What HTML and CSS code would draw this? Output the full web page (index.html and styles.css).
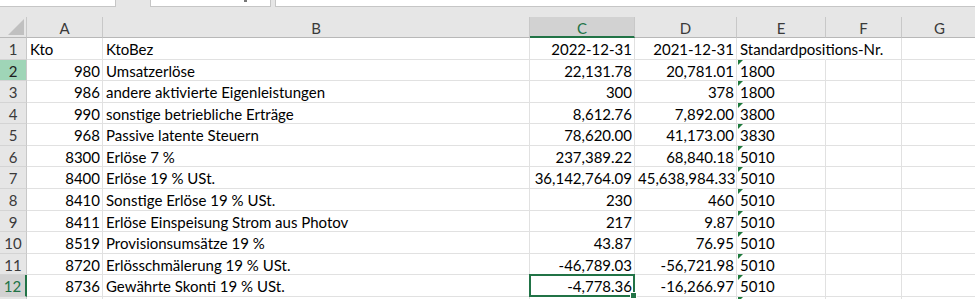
FILE: index.html
```html
<!DOCTYPE html>
<html lang="de">
<head>
<meta charset="utf-8">
<title>Tabelle</title>
<link rel="stylesheet" href="styles.css">
</head>
<body>
<div class="toolbar">
  <div class="box box-name"></div>
  <div class="box box-fn"><span class="chev"></span></div>
  <div class="box box-formula"></div>
</div>
<div class="sheet">
  <div class="corner"><span class="tri"></span></div>
  <div class="ch">A</div><div class="ch">B</div><div class="ch sel">C</div><div class="ch">D</div><div class="ch">E</div><div class="ch">F</div><div class="ch">G</div>

  <div class="rh">1</div><div class="c">Kto</div><div class="c">KtoBez</div><div class="c n">2022-12-31</div><div class="c n">2021-12-31</div><div class="c spill">Standardpositions-Nr.</div><div class="c"></div><div class="c"></div>

  <div class="rh hi">2</div><div class="c n">980</div><div class="c">Umsatzerlöse</div><div class="c n">22,131.78</div><div class="c n">20,781.01</div><div class="c t">1800</div><div class="c"></div><div class="c"></div>

  <div class="rh">3</div><div class="c n">986</div><div class="c">andere aktivierte Eigenleistungen</div><div class="c n">300</div><div class="c n">378</div><div class="c t">1800</div><div class="c"></div><div class="c"></div>

  <div class="rh">4</div><div class="c n">990</div><div class="c">sonstige betriebliche Erträge</div><div class="c n">8,612.76</div><div class="c n">7,892.00</div><div class="c t">3800</div><div class="c"></div><div class="c"></div>

  <div class="rh">5</div><div class="c n">968</div><div class="c">Passive latente Steuern</div><div class="c n">78,620.00</div><div class="c n">41,173.00</div><div class="c t">3830</div><div class="c"></div><div class="c"></div>

  <div class="rh">6</div><div class="c n">8300</div><div class="c">Erlöse 7 %</div><div class="c n">237,389.22</div><div class="c n">68,840.18</div><div class="c t">5010</div><div class="c"></div><div class="c"></div>

  <div class="rh">7</div><div class="c n">8400</div><div class="c">Erlöse 19 % USt.</div><div class="c n">36,142,764.09</div><div class="c n">45,638,984.33</div><div class="c t">5010</div><div class="c"></div><div class="c"></div>

  <div class="rh">8</div><div class="c n">8410</div><div class="c">Sonstige Erlöse 19 % USt.</div><div class="c n">230</div><div class="c n">460</div><div class="c t">5010</div><div class="c"></div><div class="c"></div>

  <div class="rh">9</div><div class="c n">8411</div><div class="c">Erlöse Einspeisung Strom aus Photov</div><div class="c n">217</div><div class="c n">9.87</div><div class="c t">5010</div><div class="c"></div><div class="c"></div>

  <div class="rh">10</div><div class="c n">8519</div><div class="c">Provisionsumsätze 19 %</div><div class="c n">43.87</div><div class="c n">76.95</div><div class="c t">5010</div><div class="c"></div><div class="c"></div>

  <div class="rh">11</div><div class="c n">8720</div><div class="c">Erlösschmälerung 19 % USt.</div><div class="c n">-46,789.03</div><div class="c n">-56,721.98</div><div class="c t">5010</div><div class="c"></div><div class="c"></div>

  <div class="rh rsel">12</div><div class="c n">8736</div><div class="c">Gewährte Skonti 19 % USt.</div><div class="c n active">-4,778.36</div><div class="c n">-16,266.97</div><div class="c t">5010</div><div class="c"></div><div class="c"></div>

  <div class="rh"></div><div class="c n"></div><div class="c"></div><div class="c n"></div><div class="c n"></div><div class="c t"></div><div class="c"></div><div class="c"></div>
</div>
</body>
</html>
```

FILE: styles.css
```css
* { box-sizing: border-box; }
html, body { margin: 0; padding: 0; }
body {
  background: #ffffff;
  font-family: Lato, "Open Sans", sans-serif;
  font-size: 15px;
  color: #000;
  width: 975px;
  height: 299px;
  overflow: hidden;
}
.toolbar {
  height: 17px;
  background: #e6e6e6;
  position: relative;
  display: flex;
  align-items: flex-start;
}
.box {
  height: 7px;
  background: #fff;
  border: 1px solid #c6c6c6;
  border-top: none;
}
.box-name { width: 116px; border-left: none; }
.box-fn { width: 121px; margin-left: 34px; position: relative; }
.box-formula { flex: 1; margin-left: 4px; border-right: none; }
.chev {
  position: absolute;
  left: 93px;
  top: 0;
  width: 3px;
  height: 2px;
  background: #777;
}
.sheet {
  display: grid;
  grid-template-columns: 27px 76px 427px 105px 102px 89px 76px 76px;
  grid-template-rows: 21px repeat(13, 21.584px);
  height: 282px;
  overflow: hidden;
}
.corner {
  background: #e6e6e6;
  border-right: 1px solid #c8c8c8;
  border-bottom: 1px solid #b8b8b8;
  position: relative;
}
.tri {
  position: absolute;
  right: 2px;
  bottom: 2px;
  width: 0;
  height: 0;
  border-left: 16px solid transparent;
  border-bottom: 16px solid #c0c0c0;
}
.ch {
  background: #e6e6e6;
  border-right: 1px solid #c8c8c8;
  border-bottom: 1px solid #b8b8b8;
  color: #3a3a3a;
  text-align: center;
  font-size: 15px;
  line-height: 22px;
}
.ch.sel {
  background: #d2d2d2;
  color: #217346;
  border-bottom: 2px solid #217346;
  line-height: 22px;
}
.rh {
  background: #e6e6e6;
  border-right: 1px solid #c8c8c8;
  border-bottom: 1px solid #d4d4d4;
  color: #3a3a3a;
  text-align: center;
  line-height: 22px;
}
.rh.hi { background: #9fd5b7; color: #1e1e1e; }
.rh.rsel {
  background: #d2d2d2;
  color: #217346;
  border-right: 2px solid #217346;
}
.c {
  border-right: 1px solid #e1e1e1;
  border-bottom: 1px solid #e1e1e1;
  padding: 0 3px;
  line-height: 22px;
  white-space: nowrap;
  overflow: hidden;
  position: relative;
}
.c.n { text-align: right; padding-right: 2px; }
.c.spill { overflow: visible; border-right-color: transparent; }
.c.t::before {
  content: "";
  position: absolute;
  left: 1px;
  top: 0;
  width: 0;
  height: 0;
  border-top: 5px solid #1e7a3c;
  border-right: 5px solid transparent;
}
.c.active { overflow: visible; }
.c.active::after {
  content: "";
  position: absolute;
  left: -1px;
  top: -1px;
  right: -1px;
  bottom: -1px;
  border: 2px solid #217346;
}
.c.active::before {
  content: "";
  position: absolute;
  right: -3px;
  bottom: -3px;
  width: 5px;
  height: 5px;
  background: #217346;
  border: 1px solid #fff;
  z-index: 2;
}
```
